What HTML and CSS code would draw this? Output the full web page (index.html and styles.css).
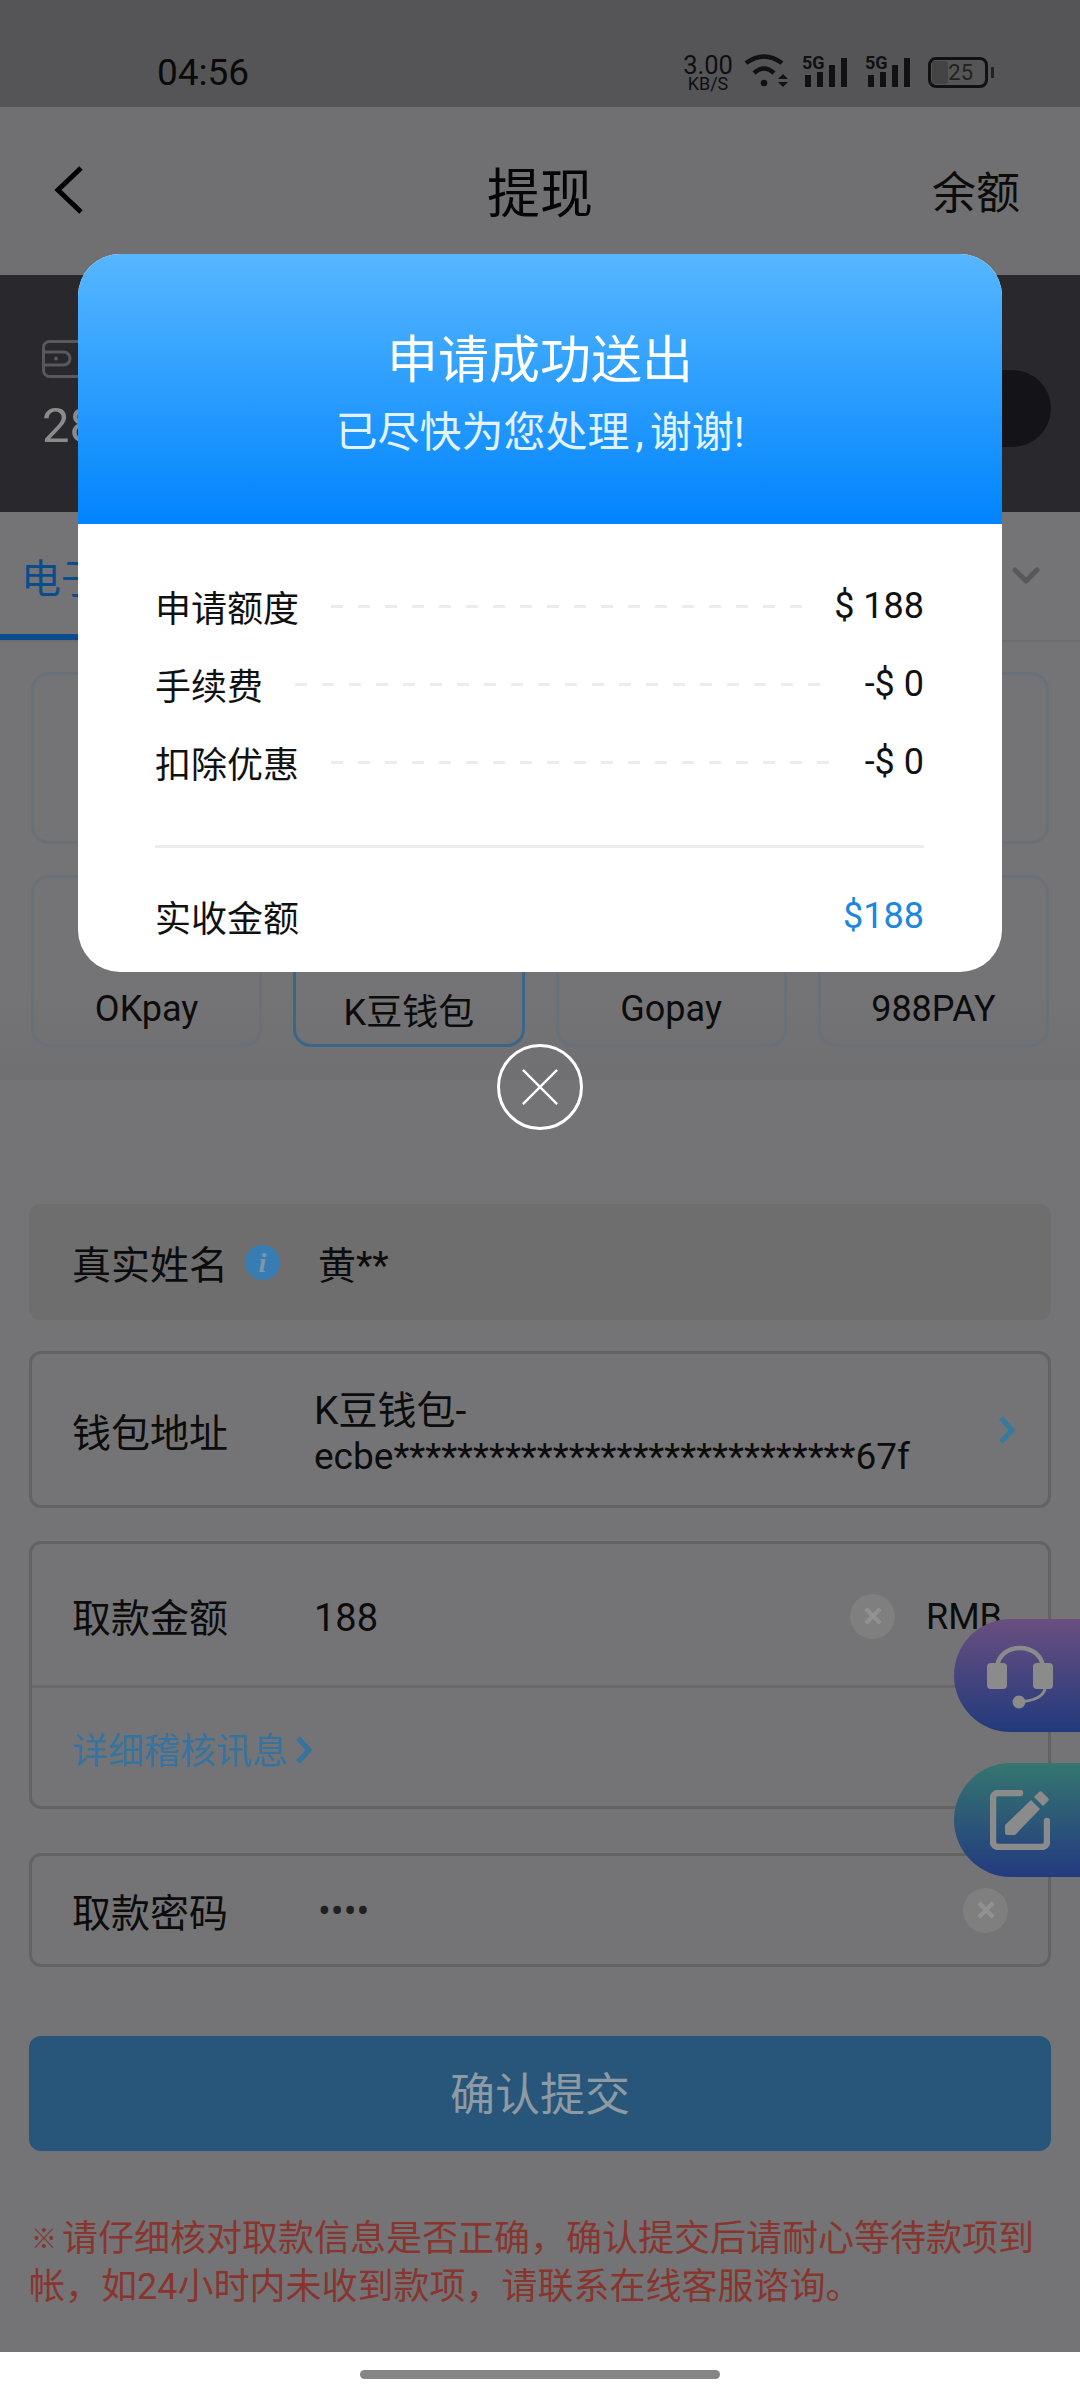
FILE: index.html
```html
<!DOCTYPE html>
<html lang="zh-CN">
<head>
    <meta charset="UTF-8">
    <meta name="viewport" content="width=device-width, initial-scale=1.0">
    <title>提现</title>
    <link rel="stylesheet" href="styles.css">
</head>
<body>
    <div class="screen">
        <div class="status-bar">
            <span class="status-time">04:56</span>
            <div class="status-icons">
                <div class="net-speed"><span class="net-value">3.00</span><span class="net-unit">KB/S</span></div>
                <svg class="icon-wifi" viewBox="0 0 44 33">
                    <path d="M2 9Q20 -4 38 9" fill="none" stroke="#111" stroke-width="4.500"/>
                    <path d="M10 19Q20 10 30 19" fill="none" stroke="#111" stroke-width="4.500"/>
                    <circle cx="20" cy="29" r="3.300" fill="#111"/>
                    <path d="M39 20l5 5h-10zM39 33l5-5h-10z" fill="#111"/>
                </svg>
                <div class="signal"><span class="signal-tag">5G</span><i class="bar b1"></i><i class="bar b2"></i><i class="bar b3"></i><i class="bar b4"></i></div>
                <div class="signal"><span class="signal-tag">5G</span><i class="bar b1"></i><i class="bar b2"></i><i class="bar b3"></i><i class="bar b4"></i></div>
                <div class="battery"><div class="battery-fill"></div><span class="battery-level">25</span></div>
            </div>
        </div>

        <header class="top-bar">
            <svg class="back" viewBox="0 0 30 48"><path d="M27 2L4 24l23 22" fill="none" stroke="#000" stroke-width="5"/></svg>
            <h1 class="page-title">提现</h1>
            <span class="top-link">余额</span>
        </header>

        <section class="balance">
            <div class="balance-info">
                <svg class="wallet" viewBox="0 0 70 38"><rect x="1.500" y="1.500" width="67" height="35" rx="6" fill="none" stroke="#59595d" stroke-width="3"/><path d="M1.500 12h20a6.500 6.500 0 0 1 0 13h-20" fill="none" stroke="#59595d" stroke-width="3"/><circle cx="14" cy="18.500" r="2" fill="#59595d"/></svg>
                <span class="balance-value">288.00</span>
            </div>
            <div class="balance-btn"></div>
        </section>

        <nav class="tabs">
            <span class="tab-active">电子钱包</span>
            <svg class="tab-more" viewBox="0 0 28 18"><path d="M3 3l11 11L25 3" fill="none" stroke="#58585a" stroke-width="5" stroke-linecap="round" stroke-linejoin="round"/></svg>
        </nav>

        <section class="pay-grid">
            <div class="pay-card"></div>
            <div class="pay-card"></div>
            <div class="pay-card"></div>
            <div class="pay-card"></div>
            <div class="pay-card"><span>OKpay</span></div>
            <div class="pay-card selected"><span>K豆钱包</span></div>
            <div class="pay-card"><b class="pay-logo">com</b><span>Gopay</span></div>
            <div class="pay-card"><span>988PAY</span></div>
        </section>

        <form class="withdraw-form">
            <div class="field field-readonly">
                <label class="field-label">真实姓名</label>
                <span class="info-dot">i</span>
                <span class="field-value name-value">黄**</span>
            </div>
            <div class="field field-wallet">
                <label class="field-label">钱包地址</label>
                <span class="field-value wallet-value"><span class="wallet-name">K豆钱包-</span><br>ecbe*****************************67f</span>
                <svg class="chevron" viewBox="0 0 18 28"><path d="M3 2l11 12L3 26" fill="none" stroke="#37799f" stroke-width="5"/></svg>
            </div>
            <div class="field-group">
                <div class="field-row">
                    <label class="field-label">取款金额</label>
                    <span class="field-value">188</span>
                    <span class="clear-btn amount-clear"><svg viewBox="0 0 20 20"><path d="M4 4l12 12M16 4L4 16" stroke="#919191" stroke-width="3.500"/></svg></span>
                    <span class="field-unit">RMB</span>
                </div>
                <div class="field-link">详细稽核讯息<svg class="link-arrow" viewBox="0 0 18 28"><path d="M3 2l11 12L3 26" fill="none" stroke="#37739f" stroke-width="5"/></svg></div>
            </div>
            <div class="field field-password">
                <label class="field-label">取款密码</label>
                <span class="field-value dots">••••</span>
                <span class="clear-btn"><svg viewBox="0 0 20 20"><path d="M4 4l12 12M16 4L4 16" stroke="#919191" stroke-width="3.500"/></svg></span>
            </div>
            <div class="submit-btn">确认提交</div>
            <p class="notice"><span class="notice-mark">※</span>请仔细核对取款信息是否正确，确认提交后请耐心等待款项到帐，如24小时内未收到款项，请联系在线客服谘询。</p>
        </form>

        <div class="home-bar"><div class="home-pill"></div></div>

        <!-- side shortcuts -->
        <div class="float-btn float-service">
            <svg viewBox="0 0 66 66"><path d="M10 26C10 -2 56 -2 56 26" fill="none" stroke="#8b8b8b" stroke-width="4.500"/><rect x="0" y="20" width="20" height="26" rx="4" fill="#8b8b8b"/><rect x="46" y="20" width="20" height="26" rx="4" fill="#8b8b8b"/><path d="M58 46C56 54 46 58 32 59" fill="none" stroke="#8b8b8b" stroke-width="3"/><circle cx="32" cy="59" r="6.500" fill="#8b8b8b"/></svg>
        </div>
        <div class="float-btn float-edit">
            <svg viewBox="0 0 60 60"><path d="M30 3H8a5 5 0 0 0-5 5v44a5 5 0 0 0 5 5h44a5 5 0 0 0 5-5V31" fill="none" stroke="#8b8b8b" stroke-width="6.500" stroke-linecap="round"/><path d="M15 35L41 10l9 9-25 26H17a2 2 0 0 1-2-2zM44 7l5-5a2 2 0 0 1 3 0l6 6a2 2 0 0 1 0 3l-5 5z" fill="#8b8b8b"/></svg>
        </div>

        <!-- result dialog -->
        <div class="dialog">
            <div class="dialog-box">
                <div class="dialog-head">
                    <div class="dialog-title">申请成功送出</div>
                    <div class="dialog-sub">已尽快为您处理<span class="sub-comma">,</span>谢谢!</div>
                </div>
                <div class="dialog-body">
                    <div class="sum-row"><span>申请额度</span><i class="leader"></i><span class="sum-num">$ 188</span></div>
                    <div class="sum-row"><span>手续费</span><i class="leader"></i><span class="sum-num">-$ 0</span></div>
                    <div class="sum-row"><span>扣除优惠</span><i class="leader"></i><span class="sum-num">-$ 0</span></div>
                    <div class="sum-total"><span>实收金额</span><span class="sum-num total-num">$188</span></div>
                </div>
            </div>
            <div class="dialog-close">
                <svg viewBox="0 0 40 40"><path d="M2 2l36 36M38 2L2 38" stroke="#fff" stroke-width="2.500"/></svg>
            </div>
        </div>
    </div>
</body>
</html>
```

FILE: styles.css
```css
/* dimmed palette, the page sits behind the dialog */
:root {
    --page-bg: #747476;
    --ink: #0c0c0c;
    --field-line: #636364;
    --card-line: #6a7078;
    --blue-text: #37739f;
}

* {
    box-sizing: border-box;
    margin: 0;
    padding: 0;
}

body {
    font-family: Roboto, "Noto Sans CJK SC", sans-serif;
    background-color: var(--page-bg);
    color: var(--ink);
}

.screen {
    position: relative;
    width: 1080px;
    height: 2400px;
    overflow: hidden;
    background-color: var(--page-bg);
}

/* status bar */
.status-bar {
    height: 107px;
    background-color: #555557;
    display: flex;
    align-items: flex-start;
    justify-content: space-between;
    padding: 51px 86px 0 157px;
}

.status-time {
    font-size: 37px;
    line-height: 44px;
    color: #0a0a0a;
}

.status-icons {
    display: flex;
    align-items: flex-start;
    margin-top: 3px;
}

.net-speed {
    width: 50px;
    margin-top: -1px;
    display: flex;
    flex-direction: column;
    align-items: center;
    color: #0f0f0f;
}

.net-value {
    font-size: 25.500px;
    line-height: 24px;
}

.net-unit {
    font-size: 18px;
    line-height: 14px;
}

.icon-wifi {
    width: 44px;
    height: 33px;
    margin-left: 11px;
}

.signal {
    position: relative;
    width: 45px;
    height: 33px;
    margin-left: 14px;
    display: flex;
    align-items: flex-end;
    gap: 6px;
    padding-left: 3px;
}

.signal + .signal {
    margin-left: 18px;
}

.signal-tag {
    position: absolute;
    left: 0;
    top: 0;
    font-size: 18px;
    line-height: 18px;
    font-weight: 700;
    color: #111;
}

.bar {
    display: block;
    width: 6px;
    background-color: #111;
}

.b1 { height: 12px; }
.b2 { height: 15px; }
.b3 { height: 22px; }
.b4 { height: 29px; }

.battery {
    position: relative;
    width: 60px;
    height: 31px;
    margin: 3px 6px 0 18px;
    border: 3px solid #111;
    border-radius: 8px;
    display: flex;
    align-items: center;
    justify-content: flex-end;
    padding-right: 12px;
}

.battery::after {
    content: "";
    position: absolute;
    right: -9px;
    top: 7px;
    width: 3px;
    height: 11px;
    background-color: #222;
}

.battery-fill {
    position: absolute;
    left: 1px;
    top: 1px;
    bottom: 1px;
    width: 16px;
    border-radius: 3px;
    background-color: #444446;
}

.battery-level {
    position: relative;
    font-size: 22px;
    line-height: 24px;
    color: #222;
}

/* header */
.top-bar {
    position: relative;
    height: 168px;
    background-color: #707072;
    display: flex;
    align-items: center;
    justify-content: center;
    padding-bottom: 2px;
}

.back {
    position: absolute;
    left: 54px;
    top: 59px;
    width: 30px;
    height: 48px;
}

.page-title {
    font-size: 53px;
    font-weight: 400;
    color: #050505;
}

.top-link {
    position: absolute;
    right: 60px;
    top: 61px;
    font-size: 44px;
    line-height: 52px;
}

/* balance band */
.balance {
    height: 237px;
    background-color: #28282d;
    display: flex;
    align-items: flex-start;
    justify-content: space-between;
    padding: 65px 29px 0 42px;
}

.balance-info {
    display: flex;
    flex-direction: column;
    gap: 22px;
}

.wallet {
    width: 70px;
    height: 38px;
}

.balance-value {
    font-size: 49px;
    line-height: 52px;
    color: #8b8b8d;
}

.balance-btn {
    width: 220px;
    height: 77px;
    margin-top: 30px;
    border-radius: 39px;
    background-color: #141418;
}

/* tabs */
.tabs {
    height: 130px;
    display: flex;
    align-items: flex-start;
    justify-content: space-between;
    border-bottom: 2px solid #6c6d70;
    padding-right: 40px;
}

.tab-active {
    width: 240px;
    height: 128px;
    padding: 44px 0 0 21px;
    font-size: 40px;
    line-height: 48px;
    color: #0b4d8c;
    border-bottom: 6px solid #0b4d8c;
}

.tab-more {
    width: 28px;
    height: 18px;
    margin-top: 55px;
}

/* payment channels */
.pay-grid {
    height: 438px;
    display: grid;
    grid-template-columns: repeat(4, 1fr);
    grid-auto-rows: 172px;
    gap: 31px;
    padding: 30px 31px 0;
    border-bottom: 2px solid #6f7072;
    background-image: linear-gradient(var(--page-bg) 80%, #707072);
}

.pay-card {
    border: 3px solid var(--card-line);
    border-radius: 18px;
    display: flex;
    flex-direction: column;
    align-items: center;
    justify-content: flex-end;
    padding-bottom: 13px;
    font-size: 36px;
    line-height: 44px;
}

.pay-card.selected {
    border-color: #3a6788;
    padding-bottom: 9px;
}

.pay-logo {
    margin-bottom: 12px;
    font-size: 30px;
    line-height: 34px;
    color: #0f4f8c;
}

/* form */
.withdraw-form {
    padding: 124px 29px 0;
}

.field {
    display: flex;
    align-items: center;
    border: 3px solid var(--field-line);
    border-radius: 12px;
    padding: 0 28px 0 40px;
}

.field-label {
    flex: none;
    width: 242px;
    margin-top: 8px;
    font-size: 39px;
    line-height: 46px;
}

.field-value {
    margin-top: 8px;
    font-size: 38px;
    line-height: 45px;
}

.field-readonly {
    position: relative;
    height: 116px;
    border: none;
    background-color: #6e6e6f;
    padding-left: 43px;
}

.field-readonly .field-label {
    width: 246px;
}

.info-dot {
    position: absolute;
    left: 216px;
    top: 41px;
    width: 35px;
    height: 35px;
    border-radius: 50%;
    background-color: #377db3;
    color: #7f97aa;
    font-family: "Liberation Serif", serif;
    font-style: italic;
    font-weight: 700;
    font-size: 28px;
    line-height: 35px;
    text-align: center;
}

.field-wallet {
    height: 157px;
    margin-top: 31px;
}

.wallet-value {
    flex: 1;
    font-size: 37px;
    white-space: nowrap;
}

.wallet-name {
    font-size: 39px;
}

.chevron {
    flex: none;
    width: 18px;
    height: 28px;
    margin-left: auto;
    margin-right: 4px;
}

.field-group {
    height: 268px;
    margin-top: 33px;
    border: 3px solid var(--field-line);
    border-radius: 12px;
}

.field-row {
    height: 144px;
    display: flex;
    align-items: center;
    padding-left: 40px;
    border-bottom: 3px solid #686869;
}

.clear-btn {
    flex: none;
    width: 45px;
    height: 45px;
    margin-left: auto;
    border-radius: 50%;
    background-color: #7f7f7f;
    display: flex;
    align-items: center;
    justify-content: center;
}

.clear-btn svg {
    width: 24px;
    height: 24px;
}

.amount-clear {
    margin-right: 31px;
    margin-top: 3px;
}

.field-unit {
    width: 122px;
    margin-top: 4px;
    font-size: 36px;
    line-height: 44px;
}

.field-link {
    display: flex;
    align-items: center;
    height: 118px;
    padding: 2px 0 0 40px;
    font-size: 36px;
    color: var(--blue-text);
}

.link-arrow {
    width: 18px;
    height: 28px;
    margin: 4px 0 0 7px;
}

.field-password {
    height: 114px;
    margin-top: 44px;
    padding-right: 40px;
}

.dots {
    padding-left: 4px;
    font-size: 38px;
    color: #202020;
    margin-top: 2px;
}

.submit-btn {
    height: 115px;
    margin-top: 69px;
    border-radius: 12px;
    background-color: #27567a;
    color: #8d9aa3;
    font-size: 45px;
    line-height: 119px;
    text-align: center;
}

.notice {
    margin-top: 64px;
    font-size: 36px;
    line-height: 48px;
    color: #883530;
}

.notice-mark {
    margin: 0 5px 0 2px;
    font-size: 26px;
    font-weight: 700;
    vertical-align: 3px;
}

/* gesture bar */
.home-bar {
    position: absolute;
    left: 0;
    right: 0;
    bottom: 0;
    height: 48px;
    background-color: #fff;
    padding-top: 18px;
}

.home-pill {
    width: 360px;
    height: 9px;
    margin: 0 auto;
    border-radius: 5px;
    background-color: #858585;
}

/* side shortcuts */
.float-btn {
    position: absolute;
    right: 0;
    width: 126px;
    border-radius: 57px 0 0 57px;
    display: flex;
    align-items: center;
}

.float-service {
    top: 1619px;
    height: 113px;
    background-image: linear-gradient(#6a4f80, #223a7c);
    padding-left: 33px;
}

.float-service svg {
    width: 66px;
    height: 66px;
}

.float-edit {
    top: 1763px;
    height: 114px;
    background-image: linear-gradient(#35766f, #233a80);
    padding-left: 36px;
}

.float-edit svg {
    width: 60px;
    height: 60px;
}

/* dialog */
.dialog {
    position: absolute;
    left: 78px;
    top: 254px;
    width: 924px;
    display: flex;
    flex-direction: column;
    align-items: center;
}

.dialog-box {
    width: 100%;
    height: 718px;
    border-radius: 42px;
    overflow: hidden;
    background-color: #fff;
}

.dialog-head {
    height: 270px;
    padding-top: 74px;
    background-image: linear-gradient(#57b7ff, #0084fd);
    color: #fff;
    text-align: center;
}

.dialog-title {
    font-size: 51px;
    line-height: 66px;
}

.dialog-sub {
    font-size: 42px;
    line-height: 50px;
    margin-top: 14px;
    color: #e2f2ff;
}

.sub-comma {
    margin: 0 6px;
}

.dialog-body {
    padding: 43px 78px 0 77px;
}

.sum-row {
    height: 78px;
    display: flex;
    align-items: center;
    font-size: 36px;
    color: #111;
}

.leader {
    flex: 1;
    height: 3px;
    margin: 0 32px;
    background-image: repeating-linear-gradient(90deg, #ececec 0 12px, transparent 12px 27px);
}

.sum-total {
    height: 112px;
    margin-top: 44px;
    padding-top: 27px;
    display: flex;
    align-items: center;
    justify-content: space-between;
    border-top: 3px solid #ededed;
    font-size: 36px;
    color: #111;
}

.total-num {
    color: #1b87de;
}

.dialog-close {
    width: 86px;
    height: 86px;
    margin-top: 72px;
    border: 3px solid #fff;
    border-radius: 50%;
    display: flex;
    align-items: center;
    justify-content: center;
}

.dialog-close svg {
    width: 38px;
    height: 38px;
}
```
